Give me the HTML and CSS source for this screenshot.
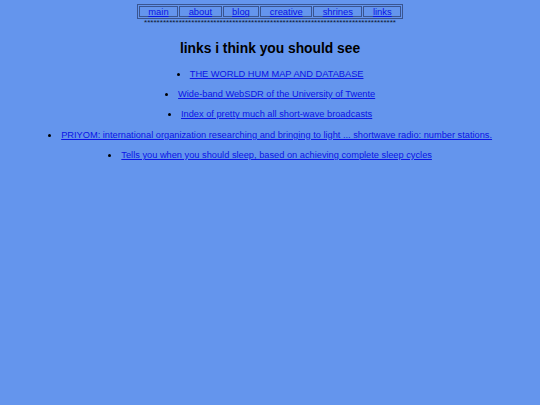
FILE: index.html
```html
<!DOCTYPE html>
<html>
<head>
<meta charset="utf-8">
<link rel="stylesheet" href="styles.css">
</head>
<body>
<div class="top">
  <table class="nav">
    <tr>
      <td><a href="#">main</a></td>
      <td><a href="#">about</a></td>
      <td><a href="#">blog</a></td>
      <td><a href="#">creative</a></td>
      <td><a href="#">shrines</a></td>
      <td><a href="#">links</a></td>
    </tr>
  </table>
  <div class="stars">********************************************************************************</div>
</div>
<h1 class="title">links i think you should see</h1>
<ul class="links">
  <li><a href="#">THE WORLD HUM MAP AND DATABASE</a></li>
  <li><a href="#">Wide-band WebSDR of the University of Twente</a></li>
  <li><a href="#">Index of pretty much all short-wave broadcasts</a></li>
  <li><a href="#">PRIYOM: international organization researching and bringing to light ... shortwave radio: number stations.</a></li>
  <li><a href="#">Tells you when you should sleep, based on achieving complete sleep cycles</a></li>
</ul>
</body>
</html>
```
FILE: styles.css
```css
html, body {
  margin: 0;
  padding: 0;
  background: #6495ed;
  font-family: "Liberation Sans", Arial, sans-serif;
  font-size: 9.25px;
  color: #000;
}
.top {
  display: flex;
  flex-direction: column;
  align-items: center;
  padding-top: 4px;
}
.nav {
  border: 1px solid #3a5590;
  border-spacing: 1px;
  font-size: 9.4px;
}
.nav td {
  border: 1px solid #3a5590;
  padding: 0 8.5px;
  line-height: 9px;
}
a {
  color: #0a14e6;
}
.stars {
  font-size: 8.1px;
  line-height: 6px;
  margin-top: 1px;
  color: #101830;
}
.title {
  text-align: center;
  font-size: 13.8px;
  font-weight: bold;
  margin: 15px 0 8px;
}
.links {
  list-style-position: inside;
  text-align: center;
  padding: 0;
  margin: 0;
}
.links li {
  line-height: 20.2px;
}
```
